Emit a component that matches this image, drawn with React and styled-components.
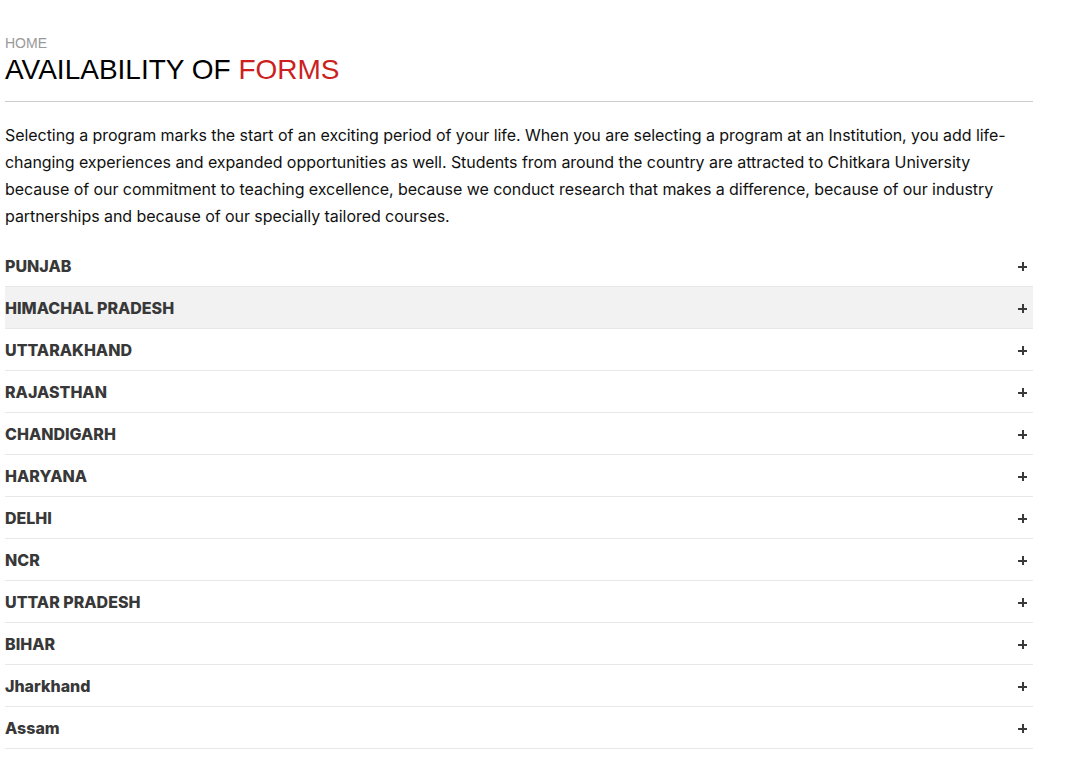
import React from 'react';
import styled, { createGlobalStyle } from 'styled-components';

const GlobalStyle = createGlobalStyle`
    body {
        margin: 0;
        background: #fff;
        font-family: Inter, "Liberation Sans", sans-serif;
    }
`;

const Page = styled.div`
    width: 1028px;
    padding: 34px 5px 0;
`;

const Crumb = styled.div`
    font-family: "Liberation Sans", Arial, sans-serif;
    font-size: 14px;
    line-height: 18px;
    color: #999;
    text-transform: uppercase;
`;

const Title = styled.h1`
    margin: 0;
    font-family: "Liberation Sans", Arial, sans-serif;
    font-weight: 400;
    font-size: 28px;
    line-height: 36px;
    color: #000;
    padding-bottom: 13px;
    border-bottom: 1px solid #ccc;

    span {
        color: #cc1f1f;
    }
`;

const Intro = styled.p`
    margin: 20px 0 15px;
    font-size: 16px;
    line-height: 27px;
    letter-spacing: -0.06px;
    color: #111;
`;

const List = styled.div`
    display: flex;
    flex-direction: column;
`;

const Row = styled.div`
    display: flex;
    align-items: center;
    justify-content: space-between;
    height: 41px;
    border-bottom: 1px solid #e8e8e8;
    background: ${(p) => (p.$active ? '#f2f2f2' : 'transparent')};
    cursor: pointer;
`;

const Label = styled.span`
    font-size: 16px;
    font-weight: 800;
    color: #383838;
`;

const Plus = styled.span`
    width: 9px;
    height: 9px;
    margin: 2px 6px 0 0;
    position: relative;

    &::before,
    &::after {
        content: '';
        position: absolute;
        background: #3a3a3a;
    }
    &::before {
        left: 0;
        top: 3.5px;
        width: 9px;
        height: 2px;
    }
    &::after {
        left: 3.5px;
        top: 0;
        width: 2px;
        height: 9px;
    }
`;

const states = [
    'PUNJAB',
    'HIMACHAL PRADESH',
    'UTTARAKHAND',
    'RAJASTHAN',
    'CHANDIGARH',
    'HARYANA',
    'DELHI',
    'NCR',
    'UTTAR PRADESH',
    'BIHAR',
    'Jharkhand',
    'Assam',
];

export default function App() {
    return (
        <Page>
            <GlobalStyle />
            <Crumb>Home</Crumb>
            <Title>
                AVAILABILITY OF <span>FORMS</span>
            </Title>
            <Intro>
                Selecting a program marks the start of an exciting period of your life. When you are selecting a program
                at an Institution, you add life-changing experiences and expanded opportunities as well. Students from
                around the country are attracted to Chitkara University because of our commitment to teaching
                excellence, because we conduct research that makes a difference, because of our industry partnerships
                and because of our specially tailored courses.
            </Intro>
            <List>
                {states.map((s, i) => (
                    <Row key={s} $active={i === 1}>
                        <Label>{s}</Label>
                        <Plus />
                    </Row>
                ))}
            </List>
        </Page>
    );
}
